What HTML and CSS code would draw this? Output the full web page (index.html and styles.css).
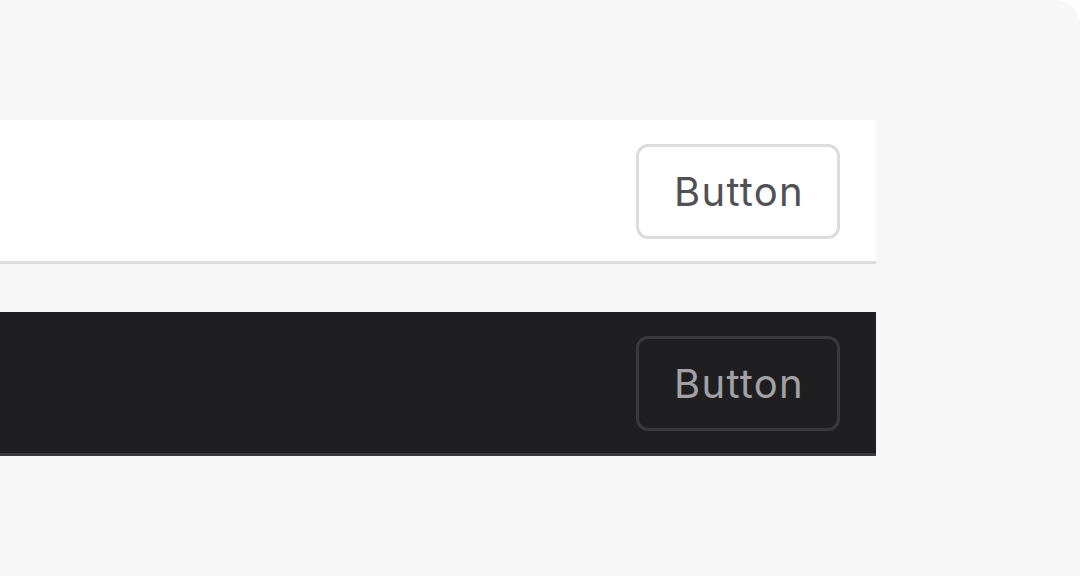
FILE: index.html
```html
<!DOCTYPE html>
<html>
<head>
<meta charset="utf-8">
<link rel="stylesheet" href="styles.css">
</head>
<body>
<div class="frame">
  <div class="bar bar-light">
    <button class="btn btn-light">Button</button>
  </div>
  <div class="bar bar-dark">
    <button class="btn btn-dark">Button</button>
  </div>
</div>
</body>
</html>
```
FILE: styles.css
```css
html, body {
  margin: 0;
  padding: 0;
  background: #ffffff;
}
.frame {
  width: 1080px;
  height: 576px;
  background: #f7f7f7;
  border-top-right-radius: 24px;
  padding-top: 120px;
  box-sizing: border-box;
  display: flex;
  flex-direction: column;
  gap: 48px;
}
.bar {
  width: 876px;
  height: 144px;
  box-sizing: border-box;
  display: flex;
  align-items: center;
  justify-content: flex-end;
  padding: 2px 36px 0 0;
}
.bar-light {
  background: #ffffff;
  border-bottom: 3px solid #dcdcdf;
}
.bar-dark {
  background: #1f1f21;
  border-bottom: 3px solid #3a3a3d;
}
.btn {
  font-family: Inter, Roboto, "Noto Sans", sans-serif;
  font-size: 40px;
  letter-spacing: 1.3px;
  height: 95px;
  width: 204px;
  border-radius: 12px;
  border: 3px solid;
  padding: 0 0 0 2px;
  box-sizing: border-box;
  display: flex;
  align-items: center;
  justify-content: center;
}
.btn-light {
  background: #ffffff;
  border-color: #dcdce0;
  color: #505055;
}
.btn-dark {
  background: #1f1f21;
  border-color: #3a3a3d;
  color: #a2a2a6;
}
```
